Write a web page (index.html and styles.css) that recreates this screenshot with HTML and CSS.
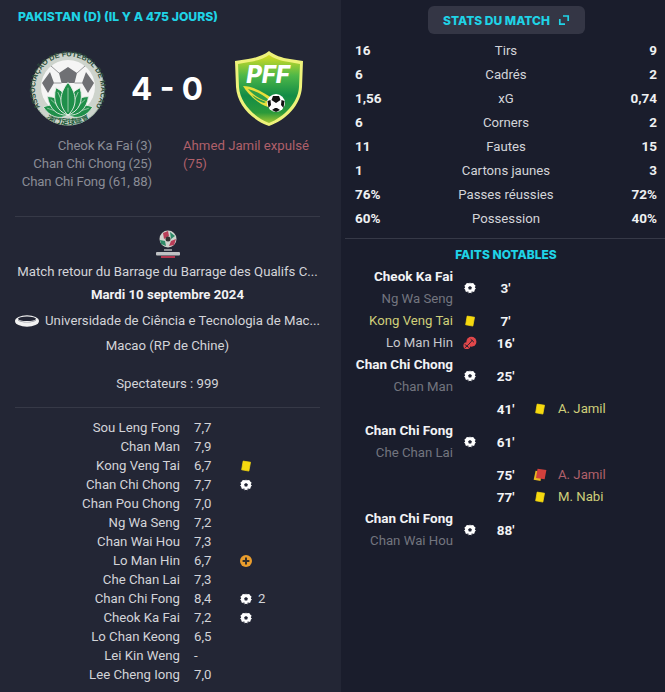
FILE: index.html
```html
<!DOCTYPE html>
<html lang="fr">
<head>
<meta charset="utf-8">
<title>Match</title>
<link rel="stylesheet" href="styles.css">
</head>
<body>
<svg class="defs" width="0" height="0" aria-hidden="true">
  <defs>
    <symbol id="ball" viewBox="0 0 12 12">
      <path fill="#fff" d="M6 .4 7.500 1.300 9.200 1.100 10.200 2.500 11.500 3.400 11.300 5 11.800 6.500 10.800 7.800 10.400 9.400 8.900 10 7.600 11.200 6 10.800 4.400 11.200 3.100 10 1.600 9.400 1.200 7.800.2 6.500.7 5 .5 3.400 1.800 2.500 2.800 1.100 4.500 1.300Z"/>
      <path fill="#222534" d="M6 3.900 7.900 5.300 7.200 7.500H4.800L4.100 5.300ZM5.200.2h1.600v1H5.200ZM0 4.400l1.200.3-.3 1.400-1-.2ZM12 4.400l-1.200.3.3 1.400 1-.2ZM3 10.300l.8-1.100 1 .8-.7 1.200ZM9 10.300l-.8-1.100-1 .8.700 1.200Z"/>
    </symbol>
    <symbol id="yellow" viewBox="0 0 13 13">
      <path fill="#f6d90f" d="M3.400 1.200 11.400 2.400 9.600 12 1.800 10.600Z" stroke="#f6d90f" stroke-width=".8" stroke-linejoin="round"/>
    </symbol>
    <symbol id="second" viewBox="0 0 13 13">
      <path fill="#e8b820" d="M2.400 2.600 8 3.400 7 12 .6 11Z"/>
      <path fill="#d2403c" d="M4.200.8 12.400 1.800 10.800 10.400 2.800 9.200Z"/>
    </symbol>
    <symbol id="own" viewBox="0 0 14 13">
      <circle cx="8.400" cy="5.200" r="5" fill="#e2474a"/>
      <circle cx="3.800" cy="9.200" r="3.400" fill="#e2474a"/>
      <path stroke="#1b1e2d" stroke-width=".9" fill="none" d="M1.600 7.800 5.800 11M5.800 7.600 2 11.400M5.800 7.800 9.600 3.400M7.600 2.600l3.400 3.200"/>
    </symbol>
    <symbol id="sub" viewBox="0 0 12 12">
      <circle cx="6" cy="6" r="6" fill="#ea9d2d"/>
      <path fill="#33302e" d="M5 2.600h2V5h2.400v2H7v2.400H5V7H2.600V5H5Z"/>
    </symbol>
    <symbol id="petal" viewBox="-10 -32 20 33" overflow="visible">
      <path d="M0 0C-9-8-9-20 0-31C9-20 9-8 0 0Z" fill="#1f8f4a" stroke="#e8efe8" stroke-width=".9"/>
      <path d="M0-3V-26" stroke="#dcebdc" stroke-width=".6"/>
    </symbol>
  </defs>
</svg>
<main class="page">
  <section class="left">
    <h1 class="title">Pakistan (D) (il y a 475 jours)</h1>
    <div class="scoreline">
      <svg class="crest-a" viewBox="0 0 74 78" role="img" aria-label="Macao">
        <defs>
          <path id="arc-top" d="M8 55A33 33 0 1 1 66 55"/>
          <path id="arc-bot" d="M12 64A35 35 0 0 0 62 64"/>
        </defs>
        <circle cx="37" cy="39" r="36.500" fill="#cdd3cc"/>
        <circle cx="37" cy="39" r="36" fill="none" stroke="#6d9479" stroke-width="1" stroke-dasharray="1.500 1.200"/>
        <text class="crest-ring"><textPath href="#arc-top" startOffset="50%" text-anchor="middle">ASSOCIAÇÃO DE FUTEBOL DE MACAU</textPath></text>
        <text class="crest-cn"><textPath href="#arc-bot" startOffset="50%" text-anchor="middle">澳門足球總會</textPath></text>
        <circle cx="37" cy="37" r="27" fill="#f5f5f5"/>
        <path fill="#6f7074" d="M28 23 37 17 46 23 43.500 33H30.500ZM11 33 19 22 23 33 17 43ZM63 33 55 22 51 33 57 43Z"/>
        <path fill="none" stroke="#8d8e91" stroke-width=".9" d="M28 23 20 16M46 23 54 16M30.500 33 23 33M43.500 33 51 33"/>
        <g transform="translate(37 65) scale(1.050)">
          <use href="#petal" x="-10" y="-32" width="20" height="33" transform="rotate(-72) scale(.8)"/>
          <use href="#petal" x="-10" y="-32" width="20" height="33" transform="rotate(72) scale(.8)"/>
          <use href="#petal" x="-10" y="-32" width="20" height="33" transform="rotate(-48) scale(.85)"/>
          <use href="#petal" x="-10" y="-32" width="20" height="33" transform="rotate(48) scale(.85)"/>
          <use href="#petal" x="-10" y="-32" width="20" height="33" transform="rotate(-24) scale(.92)"/>
          <use href="#petal" x="-10" y="-32" width="20" height="33" transform="rotate(24) scale(.92)"/>
          <use href="#petal" x="-10" y="-32" width="20" height="33"/>
        </g>
      </svg>
      <div class="score">4 - 0</div>
      <svg class="crest-b" viewBox="0 0 70 76" role="img" aria-label="PFF">
        <defs>
          <linearGradient id="pffg" x1="0" y1="0" x2="0" y2="1">
            <stop offset="0" stop-color="#d6dc22"/><stop offset=".3" stop-color="#4fb848"/><stop offset=".6" stop-color="#128c46"/><stop offset=".85" stop-color="#2c9a3a"/><stop offset="1" stop-color="#a4c832"/>
          </linearGradient>
        </defs>
        <path fill="#eef27a" d="M1 10 14 8C22 7 30 4 35 0 40 4 48 7 56 8L69 10 68 36C67 54 52 69 35 75 18 69 3 54 2 36Z"/>
        <path fill="url(#pffg)" d="M4 13 15 11C23 10 31 7 35 4 39 7 47 10 55 11L66 13 65 36C64 52 50 66 35 72 20 66 6 52 5 36Z"/>
        <text x="34" y="32" text-anchor="middle" class="crest-pff">PFF</text>
        <path fill="#e8df3c" d="M9 35c10 0 22 7 30 13l-5 8C26 54 15 45 9 35Z"/>
        <path fill="#2f9f48" d="M14 38c8 2 16 6 21 11l-3 1c-6-2-13-6-18-12ZM18 44c5 3 9 5 14 7l-2 1c-5-1-9-4-12-8Z"/>
        <circle cx="42" cy="52" r="9" fill="#fff"/>
        <path fill="#111" d="M39 45h6l1.500 4-4.500 3-4.500-3ZM33.500 50l3-1 .5 5-2.500 3ZM50.500 50l-3-1-.5 5 2.500 3ZM38 59l3-2h2l3 2-4 2Z"/>
      </svg>
    </div>
    <div class="scorers">
      <div class="scorers-home">
        <div>Cheok Ka Fai (3)</div>
        <div>Chan Chi Chong (25)</div>
        <div>Chan Chi Fong (61, 88)</div>
      </div>
      <div class="scorers-away">Ahmed Jamil expulsé (75)</div>
    </div>
    <hr class="rule">
    <div class="info">
      <svg class="comp" viewBox="0 0 26 30" role="img" aria-label="AFC Asian Cup">
        <circle cx="13" cy="9" r="8.500" fill="#cfd2cd"/>
        <path fill="#b83d58" d="M8 3 13 1 14 6 9 9ZM16 11 21 9 19 15 14 16Z"/>
        <path fill="#2f8a68" d="M15 2 20 6 16 9ZM5 10 10 11 11 16 6 14Z"/>
        <circle cx="13" cy="9" r="2.500" fill="#333"/>
        <rect x="9" y="19" width="8" height="2" fill="#8b8d92"/>
        <rect x="1" y="22" width="24" height="3.500" rx="1" fill="#bfc1c4"/>
        <rect x="6" y="26" width="14" height="2" fill="#b3344e"/>
      </svg>
      <div class="info-line match-name">Match retour du Barrage du Barrage des Qualifs C...</div>
      <div class="info-line date">Mardi 10 septembre 2024</div>
      <div class="info-line stadium">
        <svg class="stadium-ico" viewBox="0 0 24 12" aria-hidden="true">
          <ellipse cx="12" cy="6" rx="12" ry="5.800" fill="#f2f2f2"/>
          <ellipse cx="12" cy="3.800" rx="9" ry="2.300" fill="#232635"/>
          <path fill="#9a9ca4" d="M3 4.500c4 3.200 14 3.200 18 0v1c-4 2.800-14 2.800-18 0Z"/>
        </svg>
        <span>Universidade de Ciência e Tecnologia de Mac...</span>
      </div>
      <div class="info-line city">Macao (RP de Chine)</div>
      <div class="info-line crowd">Spectateurs : 999</div>
    </div>
    <hr class="rule rule-b">
    <div class="players">
      <div class="player"><span class="pn">Sou Leng Fong</span><span class="pr">7,7</span></div>
      <div class="player"><span class="pn">Chan Man</span><span class="pr">7,9</span></div>
      <div class="player"><span class="pn">Kong Veng Tai</span><span class="pr">6,7</span><svg class="pi"><use href="#yellow"/></svg></div>
      <div class="player"><span class="pn">Chan Chi Chong</span><span class="pr">7,7</span><svg class="pi"><use href="#ball"/></svg></div>
      <div class="player"><span class="pn">Chan Pou Chong</span><span class="pr">7,0</span></div>
      <div class="player"><span class="pn">Ng Wa Seng</span><span class="pr">7,2</span></div>
      <div class="player"><span class="pn">Chan Wai Hou</span><span class="pr">7,3</span></div>
      <div class="player"><span class="pn">Lo Man Hin</span><span class="pr">6,7</span><svg class="pi"><use href="#sub"/></svg></div>
      <div class="player"><span class="pn">Che Chan Lai</span><span class="pr">7,3</span></div>
      <div class="player"><span class="pn">Chan Chi Fong</span><span class="pr">8,4</span><svg class="pi"><use href="#ball"/></svg><span class="pc">2</span></div>
      <div class="player"><span class="pn">Cheok Ka Fai</span><span class="pr">7,2</span><svg class="pi"><use href="#ball"/></svg></div>
      <div class="player"><span class="pn">Lo Chan Keong</span><span class="pr">6,5</span></div>
      <div class="player"><span class="pn">Lei Kin Weng</span><span class="pr">-</span></div>
      <div class="player"><span class="pn">Lee Cheng Iong</span><span class="pr">7,0</span></div>
    </div>
  </section>
  <section class="right">
    <div class="btn-wrap">
      <div class="btn">
        <span>Stats du match</span>
        <svg class="expand" viewBox="0 0 12 12" aria-hidden="true"><path fill="none" stroke="#1fd3e6" stroke-width="1.700" d="M5 2H10.200V7M7 10.200H1.800V5"/></svg>
      </div>
    </div>
    <div class="stats">
      <div class="stat"><b>16</b><span>Tirs</span><b>9</b></div>
      <div class="stat"><b>6</b><span>Cadrés</span><b>2</b></div>
      <div class="stat"><b>1,56</b><span>xG</span><b>0,74</b></div>
      <div class="stat"><b>6</b><span>Corners</span><b>2</b></div>
      <div class="stat"><b>11</b><span>Fautes</span><b>15</b></div>
      <div class="stat"><b>1</b><span>Cartons jaunes</span><b>3</b></div>
      <div class="stat"><b>76%</b><span>Passes réussies</span><b>72%</b></div>
      <div class="stat"><b>60%</b><span>Possession</span><b>40%</b></div>
    </div>
    <hr class="rule-r">
    <h2 class="facts-title">Faits notables</h2>
    <div class="events">
      <div class="ev ev2"><div class="who"><div class="strong">Cheok Ka Fai</div><div class="assist">Ng Wa Seng</div></div><svg class="ei"><use href="#ball"/></svg><div class="min">3'</div></div>
      <div class="ev"><div class="who yellow-t">Kong Veng Tai</div><svg class="ei"><use href="#yellow"/></svg><div class="min">7'</div></div>
      <div class="ev"><div class="who plain">Lo Man Hin</div><svg class="ei ei-own"><use href="#own"/></svg><div class="min">16'</div></div>
      <div class="ev ev2"><div class="who"><div class="strong">Chan Chi Chong</div><div class="assist">Chan Man</div></div><svg class="ei"><use href="#ball"/></svg><div class="min">25'</div></div>
      <div class="ev"><div class="who"></div><span></span><div class="min">41'</div><svg class="ei"><use href="#yellow"/></svg><div class="away yellow-t">A. Jamil</div></div>
      <div class="ev ev2"><div class="who"><div class="strong">Chan Chi Fong</div><div class="assist">Che Chan Lai</div></div><svg class="ei"><use href="#ball"/></svg><div class="min">61'</div></div>
      <div class="ev"><div class="who"></div><span></span><div class="min">75'</div><svg class="ei ei-own"><use href="#second"/></svg><div class="away red-t">A. Jamil</div></div>
      <div class="ev"><div class="who"></div><span></span><div class="min">77'</div><svg class="ei"><use href="#yellow"/></svg><div class="away yellow-t">M. Nabi</div></div>
      <div class="ev ev2"><div class="who"><div class="strong">Chan Chi Fong</div><div class="assist">Chan Wai Hou</div></div><svg class="ei"><use href="#ball"/></svg><div class="min">88'</div></div>
    </div>
  </section>
</main>
</body>
</html>
```

FILE: styles.css
```css
* { box-sizing: border-box; }
html, body { margin: 0; padding: 0; }
body {
  width: 665px;
  height: 692px;
  overflow: hidden;
  background: #1a1d2c;
  color: #d6d7dc;
  font-family: "Roboto", "Liberation Sans", sans-serif;
  font-size: 13.200px;
}
.defs { position: absolute; }
.page { display: flex; height: 692px; }

.left {
  width: 341px;
  height: 692px;
  background: #232635;
  padding: 10px 21px 0 15px;
}
.title {
  margin: 0 0 0 3px;
  font-family: "Inter", sans-serif;
  font-size: 12.200px;
  line-height: 13px;
  font-weight: 800;
  text-transform: uppercase;
  color: #1fd3e6;
}
.scoreline {
  display: grid;
  grid-template-columns: 106px 92px 107px;
  align-items: center;
  justify-items: center;
  height: 78px;
  margin-top: 27px;
}
.crest-a { width: 74px; height: 78px; justify-self: start; margin-left: 16px; overflow: visible; }
.crest-b { width: 70px; height: 76px; justify-self: start; margin-left: 21px; }
.crest-ring { font: 700 7.400px "Liberation Sans", sans-serif; fill: #2f4f3c; }
.crest-cn { font: 700 7.500px "Noto Sans CJK TC", sans-serif; fill: #1e5c3a; }
.crest-pff { font: italic 800 24px "Inter", sans-serif; fill: #fff; }
.score {
  font-family: "Inter", sans-serif;
  font-size: 31.500px;
  line-height: 40px;
  font-weight: 700;
  color: #fff;
  white-space: nowrap;
}
.scorers {
  display: flex;
  margin-top: 9px;
  line-height: 18px;
  height: 54px;
}
.scorers-home { width: 137px; text-align: right; color: #8a8c96; white-space: nowrap; letter-spacing: -.13px; }
.scorers-away { margin-left: 31px; width: 130px; color: #b0606a; }
.rule { border: 0; border-top: 1px solid #363947; margin: 25px 0 0; }
.info { text-align: center; margin-top: 13px; }
.comp { display: block; width: 26px; height: 30px; margin: 0 auto; }
.info-line { color: #d3d4d9; white-space: nowrap; line-height: 16px; }
.match-name { margin-top: 4px; }
.date { margin-top: 7px; font-weight: 700; color: #f2f2f4; }
.stadium { margin-top: 10px; display: flex; align-items: center; justify-content: center; gap: 6px; }
.stadium-ico { width: 24px; height: 12px; flex: none; }
.city { margin-top: 9px; }
.crowd { margin-top: 22px; }
.rule-b { margin-top: 15px; }
.players { margin-top: 10px; }
.player {
  display: flex;
  align-items: center;
  height: 19px;
  white-space: nowrap;
}
.pn { width: 165px; text-align: right; color: #d3d4d9; }
.pr { width: 46px; margin-left: 14px; color: #d3d4d9; }
.pi { width: 12px; height: 12px; flex: none; }
.pc { margin-left: 6px; color: #d3d4d9; }

.right { width: 324px; height: 692px; padding-top: 6px; }
.btn-wrap { display: flex; justify-content: center; margin-left: 7px; }
.btn {
  width: 157px;
  height: 28px;
  background: #343645;
  border-radius: 6px;
  display: flex;
  align-items: center;
  justify-content: center;
  gap: 8px;
  font-family: "Inter", sans-serif;
  font-size: 12px;
  font-weight: 800;
  text-transform: uppercase;
  color: #1fd3e6;
}
.expand { width: 12px; height: 12px; }
.stats { margin-top: 4px; padding: 0 8px 0 14px; }
.stat {
  display: grid;
  grid-template-columns: 60px 1fr 60px;
  align-items: center;
  height: 24px;
}
.stat b { font-weight: 700; color: #eef0f2; font-size: 13.500px; }
.stat b:last-child { text-align: right; }
.stat span { text-align: center; color: #d3d4d9; }
.rule-r { border: 0; border-top: 1px solid #363947; margin: 8px 0 0 4px; }
.facts-title {
  margin: 9px 0 0;
  text-align: center;
  padding-left: 6px;
  font-family: "Inter", sans-serif;
  font-size: 12px;
  line-height: 14px;
  font-weight: 800;
  text-transform: uppercase;
  color: #1fd3e6;
}
.events { margin-top: 4px; }
.ev {
  display: grid;
  grid-template-columns: 112px 35px 35px 35px 80px;
  align-items: center;
  height: 22px;
  line-height: 22px;
  white-space: nowrap;
}
.ev2 { height: 44px; }
.who { text-align: right; grid-column: 1; }
.ev > svg, .ev > span { justify-self: center; }
.ei { width: 12px; height: 12px; margin-right: 2px; }
.ei-own { width: 14px; height: 14px; }
.min { text-align: center; font-weight: 700; color: #f2f3f5; font-size: 13.500px; }
.strong { font-weight: 700; color: #f2f3f5; font-size: 13.500px; margin-top: -1px; }
.assist { color: #73757f; margin-top: 1px; }
.plain { color: #c6c7cd; }
.yellow-t { color: #cfcf7a; }
.red-t { color: #b0606a; }
```
